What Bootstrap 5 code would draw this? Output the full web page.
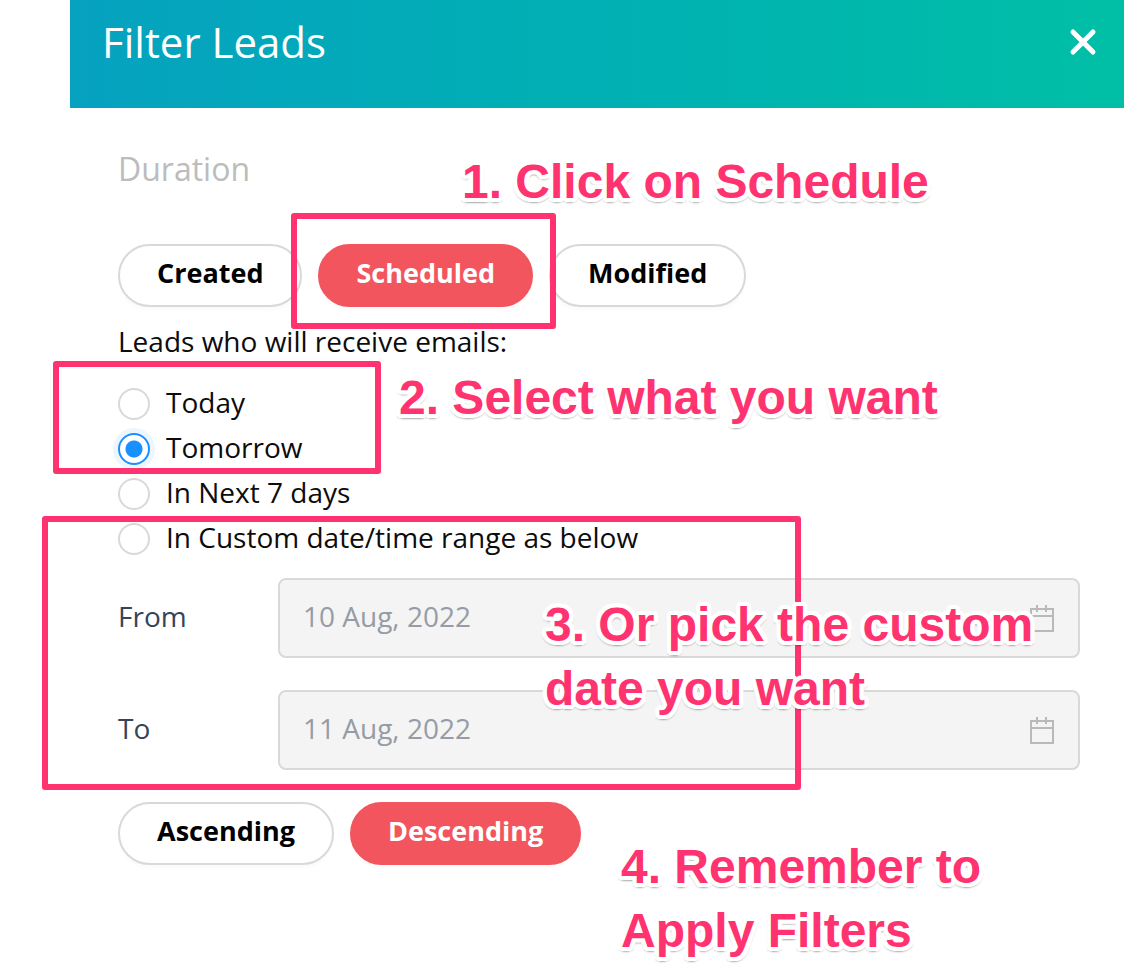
<!DOCTYPE html>
<html lang="en">
<head>
<meta charset="utf-8">
<meta name="viewport" content="width=device-width, initial-scale=1">
<title>Filter Leads</title>
<link href="https://cdn.jsdelivr.net/npm/bootstrap@5.3.0/dist/css/bootstrap.min.css" rel="stylesheet">
<style>
  body { font-family: "Open Sans", "Noto Sans", sans-serif; font-size: 28px; color: #0c0c0c; background: #fff; }
  .guide { min-height: 100vh; overflow: hidden; }
  .panel { margin-left: 70px; }
  .panel-head { height: 108px; padding: 12px 24px 34px 32px; background: linear-gradient(90deg, #06a2c0, #00b0b3 50%, #00bfa6); color: #fff; }
  .panel-head h1 { font-size: 42px; line-height: 60px; font-weight: 400; }
  .close-x { width: 34px; height: 34px; margin-top: 14px; color: #fff; }
  .panel-main { padding: 38px 44px 40px 48px; }
  .section-name { font-size: 32px; line-height: 46px; color: #bcbcbc; margin-bottom: 52px; }
  .pill { height: 63px; padding: 0 37px 5px; border: 2px solid #d9d9d9; border-radius: 32px; font-size: 27px; line-height: 54px; font-weight: 700; color: #000; background: #fff; box-shadow: 0 4px 2px rgba(0,0,0,.015); }
  .pill.active, .pill.active:hover { padding: 0 36px 5px; background: #f2555d; border-color: #f2555d; color: #fff; }
  .lead-note { line-height: 46px; margin: 11px 0 17px; }
  .choice { height: 45px; gap: 16px; line-height: 40px; }
  .choice label { padding-bottom: 4px; }
  .choice .form-check-input { width: 32px; height: 32px; margin: 0; border: 2px solid #d9d9d9; background: #fff; flex: none; }
  .choice .form-check-input:checked { border-color: #1890ff; background: radial-gradient(circle, #1890ff 8px, #fff 9px); box-shadow: 0 0 0 5px #edf5fe; }
  .dates { margin: 17px 0 32px; gap: 32px; }
  .dates label { width: 160px; color: #34445a; padding-bottom: 4px; }
  .dates .form-control { height: 80px; padding: 0 80px 5px 23px; border: 2px solid #d9d9d9; border-radius: 8px; background: #f4f4f4; color: #969ca6; font-size: 28px; }
  .cal { right: 25px; top: 27px; width: 26px; height: 28px; }
  .frame { position: absolute; border: 6px solid #ff3370; border-radius: 3px; pointer-events: none; }
  .frame-tab { left: 291px; top: 213px; width: 265px; height: 116px; }
  .frame-day { left: 53px; top: 361px; width: 328px; height: 113px; }
  .frame-range { left: 42px; top: 516px; width: 759px; height: 274px; }
  .tip { position: absolute; margin: 0; font: 700 48px/64px "Liberation Sans", Arial, sans-serif; color: #ff3370; white-space: nowrap; pointer-events: none;
    text-shadow: 4px 0 #fff, -4px 0 #fff, 0 4px #fff, 0 -4px #fff, 3px 3px #fff, -3px 3px #fff, 3px -3px #fff, -3px -3px #fff, 4px 2px #fff, -4px 2px #fff, 2px 4px #fff, -2px 4px #fff, 4px -2px #fff, -4px -2px #fff, 2px -4px #fff, -2px -4px #fff,
    0 5px 2px rgba(0,0,0,.25), 3px 4px 2px rgba(0,0,0,.2), -3px 4px 2px rgba(0,0,0,.2); }
  .tip-1 { left: 462px; top: 150px; }
  .tip-2 { left: 399px; top: 366px; }
  .tip-3 { left: 545px; top: 593px; }
  .tip-4 { left: 621px; top: 835px; }
</style>
</head>
<body>
<div class="guide position-relative">
  <main class="panel">
    <header class="panel-head d-flex justify-content-between align-items-start">
      <h1 class="m-0">Filter Leads</h1>
      <button type="button" class="close-x btn p-0 border-0 d-flex" aria-label="Close">
        <svg viewBox="0 0 34 34" width="34" height="34" fill="none" stroke="currentColor" stroke-width="5" stroke-linecap="round"><path d="M7 6 27 26M27 6 7 26"/></svg>
      </button>
    </header>
    <form class="panel-main">
      <h2 class="section-name fw-normal">Duration</h2>
      <div class="d-flex gap-3">
        <button type="button" class="btn pill">Created</button>
        <button type="button" class="btn pill active">Scheduled</button>
        <button type="button" class="btn pill">Modified</button>
      </div>
      <p class="lead-note">Leads who will receive emails:</p>
      <div>
        <div class="choice d-flex align-items-center"><input class="form-check-input" type="radio" name="when" id="today"><label for="today">Today</label></div>
        <div class="choice d-flex align-items-center"><input class="form-check-input" type="radio" name="when" id="tomorrow" checked><label for="tomorrow">Tomorrow</label></div>
        <div class="choice d-flex align-items-center"><input class="form-check-input" type="radio" name="when" id="week"><label for="week">In Next 7 days</label></div>
        <div class="choice d-flex align-items-center"><input class="form-check-input" type="radio" name="when" id="custom"><label for="custom">In Custom date/time range as below</label></div>
      </div>
      <div class="dates d-flex flex-column">
        <div class="d-flex align-items-center">
          <label for="from" class="flex-shrink-0">From</label>
          <div class="position-relative flex-grow-1">
            <input type="text" class="form-control" id="from" value="10 Aug, 2022" disabled>
            <svg class="cal position-absolute" viewBox="0 0 26 28" fill="none" stroke="#b9b9b9" stroke-width="2"><path d="M2 4h22v22H2zM2 11h22M8 0v7M17 0v7"/></svg>
          </div>
        </div>
        <div class="d-flex align-items-center">
          <label for="to" class="flex-shrink-0">To</label>
          <div class="position-relative flex-grow-1">
            <input type="text" class="form-control" id="to" value="11 Aug, 2022" disabled>
            <svg class="cal position-absolute" viewBox="0 0 26 28" fill="none" stroke="#b9b9b9" stroke-width="2"><path d="M2 4h22v22H2zM2 11h22M8 0v7M17 0v7"/></svg>
          </div>
        </div>
      </div>
      <div class="d-flex gap-3">
        <button type="button" class="btn pill">Ascending</button>
        <button type="button" class="btn pill active">Descending</button>
      </div>
    </form>
  </main>
  <div class="frame frame-tab"></div>
  <div class="frame frame-day"></div>
  <div class="frame frame-range"></div>
  <p class="tip tip-1">1. Click on Schedule</p>
  <p class="tip tip-2">2. Select what you want</p>
  <p class="tip tip-3">3. Or pick the custom<br>date you want</p>
  <p class="tip tip-4">4. Remember to<br>Apply Filters</p>
</div>
<script src="https://cdn.jsdelivr.net/npm/bootstrap@5.3.0/dist/js/bootstrap.bundle.min.js"></script>
</body>
</html>
